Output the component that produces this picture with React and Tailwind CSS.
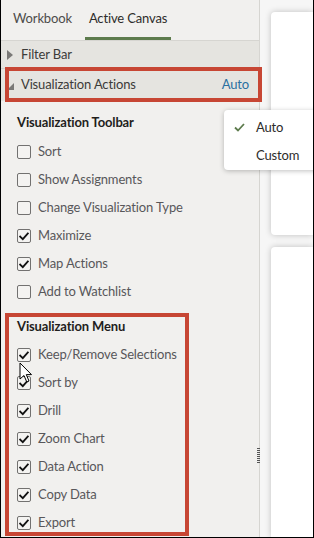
import React from "react";

function Box({ checked }) {
  return (
    <span className="w-[14px] h-[14px] border border-[#727170] rounded-[2px] flex items-center justify-center shrink-0 bg-[#f4f3f1]">
      {checked && (
        <svg width="10" height="9" viewBox="0 0 10 9">
          <path d="M1.2 4.6 L3.8 7.2 L8.8 1.4" fill="none" stroke="#111" strokeWidth="1.8" strokeLinecap="square" />
        </svg>
      )}
    </span>
  );
}

function Row({ label, checked }) {
  return (
    <div className="h-[28px] flex items-center gap-[7px] pl-[16px]">
      <Box checked={checked} />
      <span className="text-[13px] tracking-[-0.15px] text-[#58575a]">{label}</span>
    </div>
  );
}

export default function App() {
  const toolbar = [
    ["Sort", false],
    ["Show Assignments", false],
    ["Change Visualization Type", false],
    ["Maximize", true],
    ["Map Actions", true],
    ["Add to Watchlist", false],
  ];
  const menu = [
    "Keep/Remove Selections",
    "Sort by",
    "Drill",
    "Zoom Chart",
    "Data Action",
    "Copy Data",
    "Export",
  ];
  return (
    <div
      className="relative w-[314px] h-[538px] flex border-x border-b border-black bg-[#f6f6f6] overflow-hidden"
      style={{ fontFamily: 'Lato, "Open Sans", sans-serif' }}
    >
      <div className="w-[259px] shrink-0 flex flex-col bg-[#f1f0ee] border-r border-[#d6d5d1] relative">
        <div className="h-[41px] flex gap-[9px] pl-[8px] border-b border-[#d6d5d1]">
          <div className="h-[40px] flex items-center pt-[1px] px-[4px] border-b-[3px] border-transparent text-[13px] tracking-[-0.15px] text-[#4d4c4a]">
            Workbook
          </div>
          <div className="h-[40px] flex items-center pt-[1px] px-[4px] border-b-[3px] border-[#5d7b4d] text-[13px] tracking-[-0.15px] text-[#2d2c2a]">
            Active Canvas
          </div>
        </div>
        <div className="h-[28px] flex items-center bg-[#e5e4e0] border-b border-[#d3d2ce] pl-[6px]">
          <svg width="7" height="10" viewBox="0 0 7 10" className="mr-[7px]">
            <path d="M0 0 L6 5 L0 10 Z" fill="#7a7977" />
          </svg>
          <span className="text-[13px] tracking-[-0.15px] text-[#3c3b39]">Filter Bar</span>
        </div>
        <div className="h-[32px] flex items-center bg-[#e5e4e0] pl-[6px] pr-[10px]">
          <svg width="7" height="7" viewBox="0 0 7 7" className="mr-[7px] mt-[3px]">
            <path d="M7 0 L7 7 L0 7 Z" fill="#7a7977" />
          </svg>
          <span className="text-[13px] tracking-[-0.15px] text-[#3c3b39] flex-1">Visualization Actions</span>
          <span className="text-[13px] tracking-[-0.15px] text-[#2a70a0]">Auto</span>
        </div>
        <div className="pt-[13px]">
          <div className="h-[18px] flex items-center pl-[16px] text-[13px] tracking-[-0.15px] font-bold text-[#1f1e1c]">
            Visualization Toolbar
          </div>
          <div className="mt-[6px]">
            {toolbar.map(([l, c]) => (
              <Row key={l} label={l} checked={c} />
            ))}
          </div>
          <div className="mt-[12px] h-[18px] flex items-center pl-[16px] text-[13px] tracking-[-0.15px] font-bold text-[#1f1e1c]">
            Visualization Menu
          </div>
          <div className="mt-[5px]">
            {menu.map((l) => (
              <Row key={l} label={l} checked={true} />
            ))}
          </div>
        </div>
        <div className="absolute left-[256px] top-[448px] flex gap-[1px]">
          <svg width="3" height="15" viewBox="0 0 3 15">
            {[0, 2, 4, 6, 8, 10, 12, 14].map((y) => (
              <rect key={y} x="0" y={y} width="3" height="1" fill="#555" />
            ))}
          </svg>
        </div>
      </div>

      <div className="flex-1 flex flex-col pt-[12px] pl-[11px] gap-[12px]">
        <div className="h-[223px] bg-white rounded-tl-[4px] rounded-bl-[4px] shadow-[0_0_6px_rgba(0,0,0,0.22)]"></div>
        <div className="flex-1 bg-white rounded-tl-[4px] shadow-[0_0_6px_rgba(0,0,0,0.22)]"></div>
      </div>

      <div className="absolute left-[223px] top-[110px] w-[100px] h-[60px] bg-white rounded-[4px] shadow-[0_1px_5px_rgba(0,0,0,0.25)] flex flex-col justify-center pt-[3px]">
        <div className="h-[30px] flex items-center pl-[10px]">
          <svg width="11" height="9" viewBox="0 0 11 9" className="mr-[11px]">
            <path d="M1 4.5 L4 7.5 L10 1" fill="none" stroke="#5d7b4d" strokeWidth="1.8" />
          </svg>
          <span className="text-[13px] tracking-[-0.15px] text-[#2d2c2a]">Auto</span>
        </div>
        <div className="h-[30px] flex items-center pl-[32px]">
          <span className="text-[13px] tracking-[-0.15px] text-[#2d2c2a]">Custom</span>
        </div>
      </div>

      <div className="absolute left-[4px] top-[67px] w-[257px] h-[35px] border-[4px] border-[#c74634] pointer-events-none"></div>
      <div className="absolute left-[4px] top-[313px] w-[184px] h-[223px] border-[4px] border-[#c74634] pointer-events-none"></div>

      <svg className="absolute left-[18px] top-[362px]" width="14" height="22" viewBox="0 0 14 22">
        <path d="M1 1 L1 17 L5 13.5 L7.8 20 L10 19 L7.3 12.6 L12.5 12.6 Z" fill="#fff" stroke="#000" strokeWidth="1" strokeLinejoin="round" />
      </svg>
    </div>
  );
}
